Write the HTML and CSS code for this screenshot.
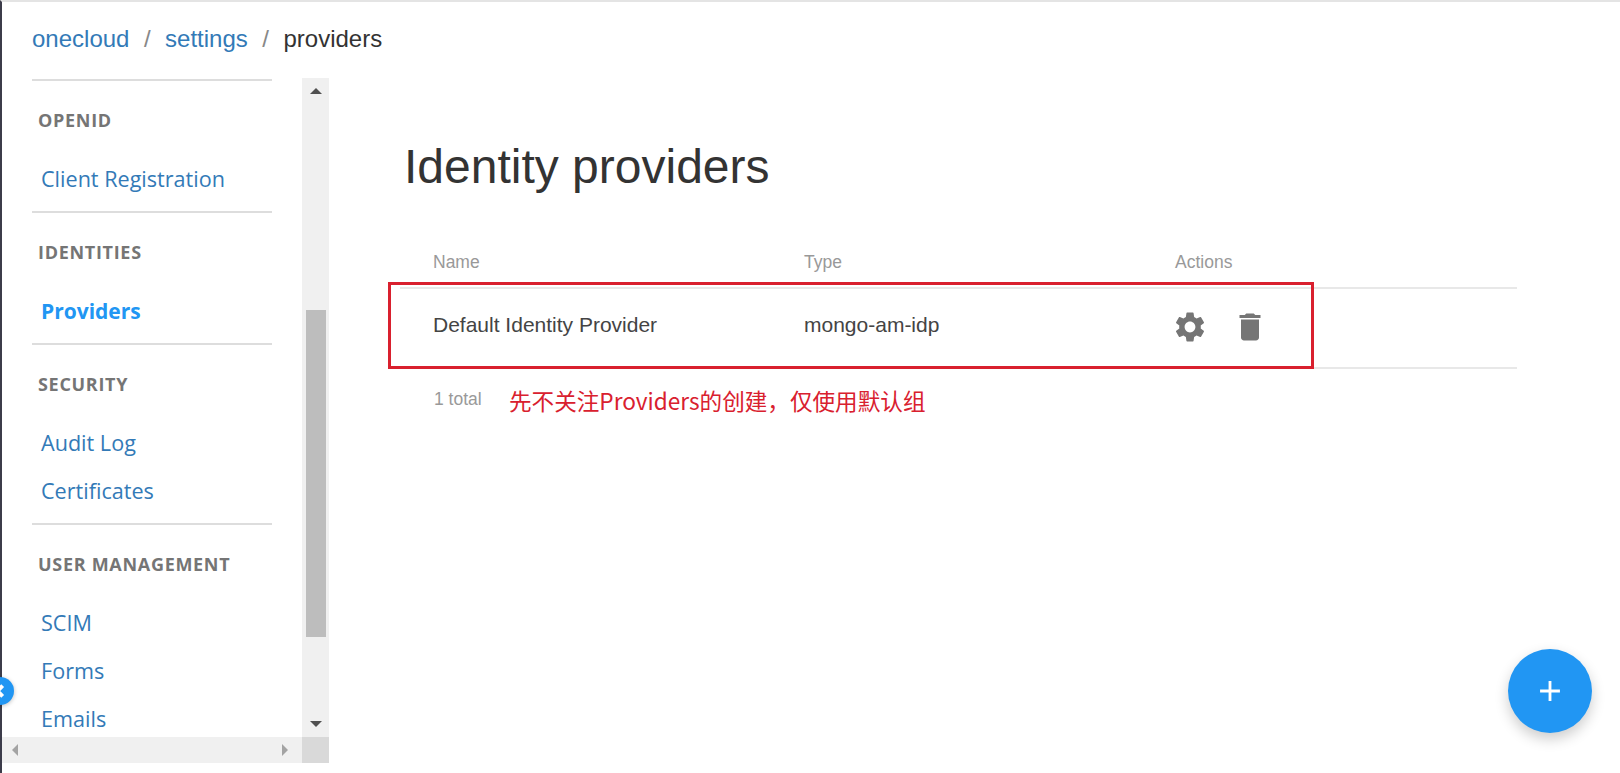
FILE: index.html
```html
<!DOCTYPE html>
<html lang="en">
<head>
    <meta charset="UTF-8">
    <meta name="viewport" content="width=device-width, initial-scale=1.0">
    <title>Identity providers</title>
    <link rel="stylesheet" href="styles.css">
</head>
<body>
    <div class="page">
        <div class="breadcrumb">
            <a href="#">onecloud</a><span class="sep">/</span><a href="#">settings</a><span class="sep">/</span><span class="current">providers</span>
        </div>

        <div class="layout">
            <div class="side-wrap">
                <div class="side-top">
                    <nav class="side-nav">
                        <div class="nav-section">
                            <h4>OPENID</h4>
                            <a href="#">Client Registration</a>
                        </div>
                        <div class="nav-section">
                            <h4>IDENTITIES</h4>
                            <a href="#" class="active">Providers</a>
                        </div>
                        <div class="nav-section">
                            <h4>SECURITY</h4>
                            <a href="#">Audit Log</a>
                            <a href="#">Certificates</a>
                        </div>
                        <div class="nav-section">
                            <h4>USER MANAGEMENT</h4>
                            <a href="#">SCIM</a>
                            <a href="#">Forms</a>
                            <a href="#">Emails</a>
                        </div>
                    </nav>
                    <div class="vbar">
                        <span class="arrow arrow-up"></span>
                        <div class="vtrack"><div class="vthumb"></div></div>
                        <span class="arrow arrow-down"></span>
                    </div>
                </div>
                <div class="hbar">
                    <div class="hbar-track">
                        <span class="arrow arrow-left"></span>
                        <span class="arrow arrow-right"></span>
                    </div>
                    <div class="hbar-corner"></div>
                </div>
            </div>

            <main class="content">
                <h1>Identity providers</h1>
                <div class="table">
                    <div class="row head">
                        <div>Name</div>
                        <div>Type</div>
                        <div>Actions</div>
                    </div>
                    <div class="row body-row">
                        <div class="cell">Default Identity Provider</div>
                        <div class="cell">mongo-am-idp</div>
                        <div class="actions">
                            <svg viewBox="0 0 24 24"><path d="M19.14 12.94c.04-.3.06-.61.06-.94 0-.32-.02-.64-.07-.94l2.03-1.58a.49.49 0 0 0 .12-.61l-1.92-3.32a.488.488 0 0 0-.59-.22l-2.39.96c-.5-.38-1.03-.7-1.62-.94l-.36-2.54a.484.484 0 0 0-.48-.41h-3.84c-.24 0-.43.17-.47.41l-.36 2.54c-.59.24-1.13.57-1.62.94l-2.39-.96c-.22-.08-.47 0-.59.22L2.74 8.87c-.12.21-.08.47.12.61l2.03 1.58c-.05.3-.09.63-.09.94s.02.64.07.94l-2.03 1.58a.49.49 0 0 0-.12.61l1.92 3.32c.12.22.37.29.59.22l2.39-.96c.5.38 1.03.7 1.62.94l.36 2.54c.05.24.24.41.48.41h3.84c.24 0 .44-.17.47-.41l.36-2.54c.59-.24 1.13-.56 1.62-.94l2.39.96c.22.08.47 0 .59-.22l1.92-3.32c.12-.22.07-.47-.12-.61l-2.01-1.58zM12 15.6c-1.98 0-3.6-1.62-3.6-3.6s1.62-3.6 3.6-3.6 3.6 1.62 3.6 3.6-1.62 3.6-3.6 3.6z"/></svg>
                            <svg viewBox="0 0 24 24"><path d="M6 19c0 1.1.9 2 2 2h8c1.1 0 2-.9 2-2V7H6v12zM19 4h-3.5l-1-1h-5l-1 1H5v2h14V4z"/></svg>
                        </div>
                    </div>
                    <div class="total">1 total</div>
                </div>
            </main>
        </div>

        <!-- annotation drawn over the screenshot -->
        <div class="note-box"></div>
        <div class="note-text">先不关注Providers的创建，仅使用默认组</div>

        <button class="collapse">
            <svg viewBox="0 0 12 12"><path d="M8 2 4 6l4 4" fill="none" stroke="#fff" stroke-width="3"/></svg>
        </button>
        <button class="fab">
            <svg viewBox="0 0 24 24"><path d="M19 13h-6v6h-2v-6H5v-2h6V5h2v6h6v2z"/></svg>
        </button>
    </div>
</body>
</html>
```

FILE: styles.css
```css
/* page frame */
html, body {
    margin: 0;
    padding: 0;
    background-color: #fff;
}
body {
    font-family: "Liberation Sans", Arial, sans-serif;
    overflow: hidden;
}
a {
    color: #337ab7;
    text-decoration: none;
}
.page {
    position: relative;
    width: 1620px;
    height: 773px;
    box-sizing: border-box;
    border-top: 2px solid #e4e4e4;
    border-left: 2px solid #3c3c4a;
}

/* breadcrumb */
.breadcrumb {
    height: 76px;
    box-sizing: border-box;
    padding: 23px 0 0 30px;
    font-size: 24px;
    line-height: 28px;
    color: #333;
}
.breadcrumb .sep {
    margin: 0 14.5px;
    color: #888;
}

.layout {
    display: flex;
}

/* left menu */
.side-wrap {
    width: 327px;
    flex-shrink: 0;
    height: 685px;
}
.side-top {
    display: flex;
    height: 659px;
}
.side-nav {
    width: 300px;
    padding: 1px 0 0 30px;
    box-sizing: border-box;
    overflow: hidden;
}
.nav-section {
    width: 240px;
    border-top: 2px solid #ddd;
    padding: 27px 0 8px;
}
.nav-section h4 {
    margin: 0 0 23px 6px;
    font-family: "Open Sans", sans-serif;
    font-size: 18px;
    line-height: 24px;
    font-weight: 700;
    letter-spacing: 0.7px;
    color: #757575;
    white-space: nowrap;
}
.nav-section a {
    display: block;
    height: 48px;
    line-height: 48px;
    margin-left: 9px;
    font-family: "Open Sans", sans-serif;
    font-size: 21.6px;
    white-space: nowrap;
}
.nav-section a.active {
    font-weight: 700;
    font-size: 21px;
    color: #2196f3;
}

/* scrollbars */
.vbar {
    width: 27px;
    background-color: #f0f0f0;
    display: flex;
    flex-direction: column;
    align-items: center;
}
.vtrack {
    flex: 1;
    width: 20px;
    padding-top: 207px;
    box-sizing: border-box;
}
.vthumb {
    height: 327px;
    background-color: #bdbdbd;
}
.hbar {
    display: flex;
    height: 26px;
}
.hbar-track {
    width: 300px;
    background-color: #f0f0f0;
    display: flex;
    justify-content: space-between;
    align-items: center;
    padding: 0 14px 0 10px;
    box-sizing: border-box;
}
.hbar-corner {
    width: 27px;
    background-color: #d9d9d9;
}
.arrow {
    width: 0;
    height: 0;
    border-style: solid;
    flex-shrink: 0;
}
.arrow-up {
    margin: 10px 0 9px;
    border-width: 0 6px 6px;
    border-color: transparent transparent #505050;
}
.arrow-down {
    margin: 9px 0 10px;
    border-width: 6px 6px 0;
    border-color: #505050 transparent transparent;
}
.arrow-left {
    border-width: 6px 6px 6px 0;
    border-color: transparent #a3a3a3 transparent transparent;
}
.arrow-right {
    border-width: 6px 0 6px 6px;
    border-color: transparent transparent transparent #a3a3a3;
}

/* main area */
.content {
    flex: 1;
    padding: 0 103px 0 71px;
}
.content h1 {
    margin: 53px 0 0 4px;
    font-size: 48px;
    line-height: 72px;
    font-weight: 400;
    color: #333;
}
.table {
    margin-top: 41px;
}
.row {
    display: grid;
    grid-template-columns: 371px 371px 1fr;
    padding-left: 33px;
    border-bottom: 2px solid #e8e8e8;
}
.row.head {
    height: 45px;
    line-height: 36px;
    box-sizing: border-box;
    font-size: 17.5px;
    color: #999;
}
.row.body-row {
    height: 80px;
    box-sizing: border-box;
    align-items: center;
    font-size: 21px;
    color: #444;
}
.cell {
    padding-bottom: 6px;
}
.actions {
    display: flex;
    gap: 24px;
    margin: 0 0 2px -3px;
}
.actions svg {
    width: 36px;
    height: 36px;
    fill: #757575;
}
.total {
    padding: 20px 0 0 34px;
    font-size: 17.5px;
    line-height: 20px;
    color: #999;
}

/* annotation */
.note-box {
    position: absolute;
    left: 386px;
    top: 280px;
    width: 926px;
    height: 87px;
    box-sizing: border-box;
    border: 3px solid #d9202e;
}
.note-text {
    position: absolute;
    left: 507px;
    top: 384px;
    font-family: "Noto Sans CJK SC", sans-serif;
    font-size: 22.6px;
    line-height: 30px;
    color: #d9202e;
    white-space: nowrap;
}

/* floating buttons */
.collapse {
    position: absolute;
    left: -16px;
    top: 675px;
    width: 28px;
    height: 28px;
    padding: 0;
    border: none;
    border-radius: 50%;
    background-color: #2196f3;
    box-shadow: 0 1px 4px rgba(0, 0, 0, 0.25);
    display: flex;
    align-items: center;
    justify-content: center;
}
.collapse svg {
    width: 16px;
    height: 16px;
}
.fab {
    position: absolute;
    left: 1506px;
    top: 647px;
    width: 84px;
    height: 84px;
    padding: 0;
    border: none;
    border-radius: 50%;
    background-color: #2196f3;
    box-shadow: 0 6px 14px rgba(0, 0, 0, 0.2);
    display: flex;
    align-items: center;
    justify-content: center;
}
.fab svg {
    width: 34px;
    height: 34px;
    fill: #fff;
}
```
